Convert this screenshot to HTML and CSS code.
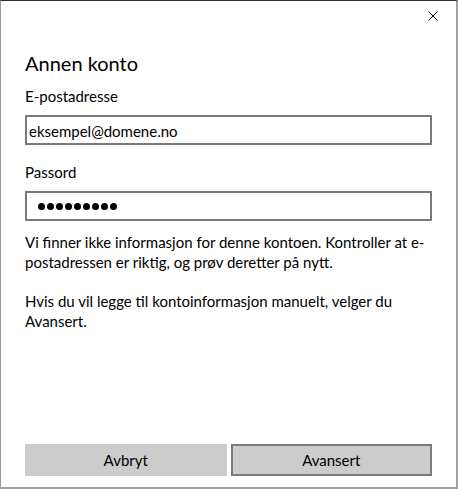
FILE: index.html
```html
<!DOCTYPE html>
<html lang="nb">
<head>
<meta charset="utf-8">
<title>Annen konto</title>
<link rel="stylesheet" href="styles.css">
</head>
<body>
<div class="dialog">
  <div class="titlebar">
    <button class="close" aria-label="Lukk">
      <svg width="10" height="10" viewBox="0 0 10 10"><path d="M0.5 0.5L9.5 9.5M9.5 0.5L0.5 9.5" stroke="#000" stroke-width="1" fill="none"/></svg>
    </button>
  </div>
  <div class="content">
    <h1 class="title">Annen konto</h1>
    <div class="label label-first">E-postadresse</div>
    <div class="input">eksempel@domene.no</div>
    <div class="label">Passord</div>
    <div class="input password">
      <span class="dot"></span><span class="dot"></span><span class="dot"></span><span class="dot"></span><span class="dot"></span><span class="dot"></span><span class="dot"></span><span class="dot"></span><span class="dot"></span>
    </div>
    <p class="msg msg-first">Vi finner ikke informasjon for denne kontoen. Kontroller at e-postadressen er riktig, og prøv deretter på nytt.</p>
    <p class="msg">Hvis du vil legge til kontoinformasjon manuelt, velger du Avansert.</p>
  </div>
  <div class="footer">
    <button class="btn">Avbryt</button>
    <button class="btn btn-primary">Avansert</button>
  </div>
</div>
</body>
</html>
```
FILE: styles.css
```css
html, body {
  margin: 0;
  padding: 0;
  background: #fff;
}
body {
  font-family: "Lato", "Noto Sans", sans-serif;
  color: #000;
}
.dialog {
  box-sizing: border-box;
  width: 458px;
  height: 489px;
  border-top: 1px solid #2e2e2e;
  border-left: 1px solid #9a9a9a;
  border-right: 2px solid #a0a0a0;
  border-bottom: 2px solid #a0a0a0;
  display: flex;
  flex-direction: column;
  background: #fff;
}
.titlebar {
  height: 30px;
  display: flex;
  justify-content: flex-end;
}
.close {
  width: 46px;
  height: 30px;
  border: 0;
  padding: 0;
  margin: 0;
  background: transparent;
  display: flex;
  align-items: center;
  justify-content: center;
}
.close svg {
  display: block;
}
.content {
  flex: 1;
  padding: 0 24px;
  display: flex;
  flex-direction: column;
}
.title {
  margin: 18px 0 0;
  font-size: 20px;
  line-height: 28px;
  font-weight: 400;
}
.label {
  font-size: 15px;
  line-height: 20px;
  margin-top: 17px;
}
.label-first {
  margin-top: 9px;
}
.input {
  box-sizing: border-box;
  height: 30px;
  margin-top: 9px;
  border: 2px solid #7a7a7a;
  font-size: 15px;
  line-height: 20px;
  padding: 2px 0 0 2px;
  display: flex;
  align-items: center;
}
.password {
  padding: 0 0 0 11px;
  gap: 2px;
}
.dot {
  width: 7px;
  height: 7px;
  border-radius: 50%;
  background: #000;
}
.msg {
  font-size: 15px;
  line-height: 20px;
  margin: 19px 0 0;
}
.msg-first {
  margin-top: 11px;
}
.footer {
  display: flex;
  gap: 4px;
  padding: 0 24px 11px;
}
.btn {
  flex: 1;
  box-sizing: border-box;
  height: 32px;
  margin: 0;
  border: 2px solid transparent;
  background: #cccccc;
  font-family: "Lato", "Noto Sans", sans-serif;
  font-size: 15px;
  line-height: 20px;
  color: #000;
  padding: 0;
}
.btn-primary {
  border-color: #7a7a7a;
}
```
